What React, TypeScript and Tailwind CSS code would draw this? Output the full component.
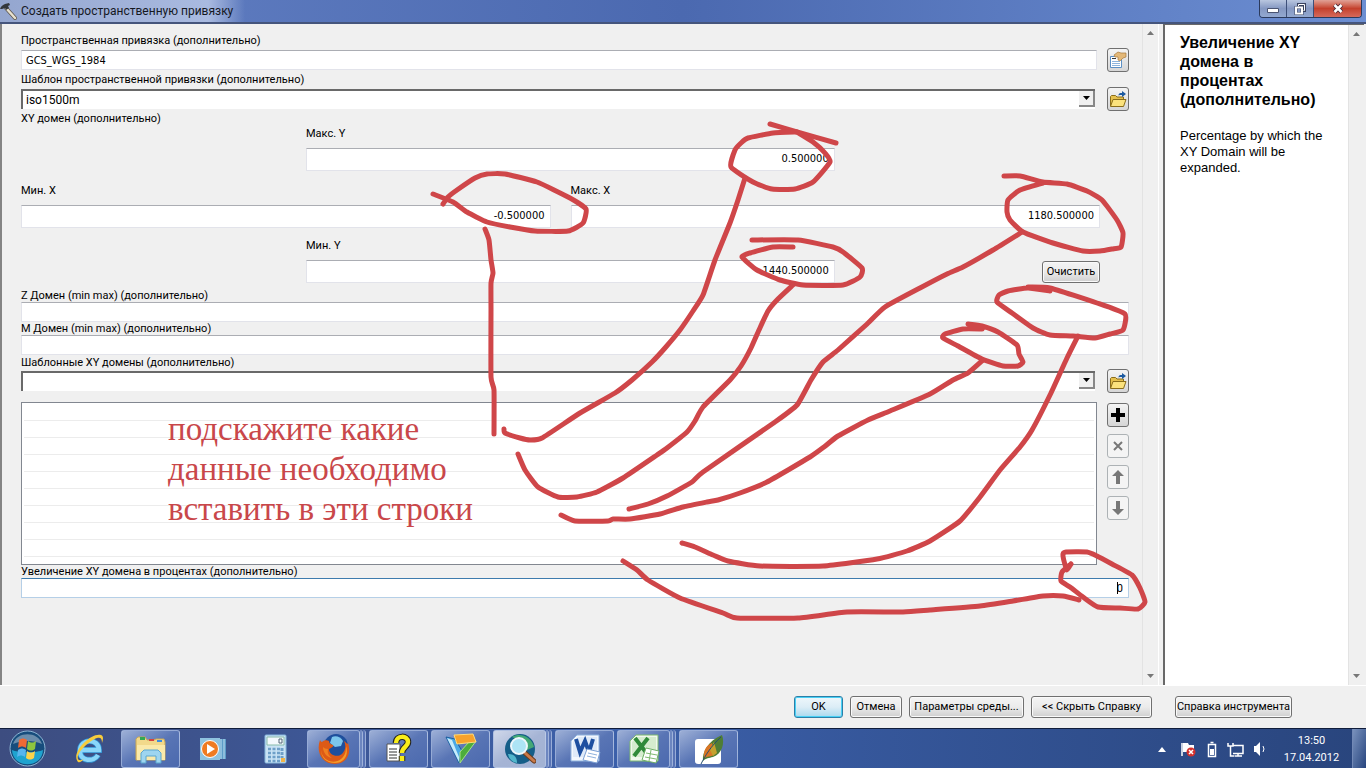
import type { ReactNode } from 'react'

const LABEL = "block text-[11px] text-black whitespace-nowrap"
const FIELD =
  "block w-full border border-[#e2e3ea] border-t-[#abadb3] bg-white px-1 text-[11px] text-black outline-none font-['DejaVu_Sans_Condensed',sans-serif]"
const BUTTON =
  "h-[22px] shrink-0 whitespace-nowrap rounded-[3px] border border-[#707070] bg-linear-to-b from-[#f4f4f4] via-[#ebebeb] to-[#cfcfcf] text-[11px] text-black shadow-[inset_0_0_0_1px_#fafafa]"

// Freehand red marks drawn over the dialog
const strokes = [
  '770,124 797,132 836,143',
  '797,132 813,142 825,153 830,162 813,182 795,189 772,189 753,182 731,167 735,150 741,143 748,138 773,133 797,132',
  '745,178 738,200 730,223 715,260 703,295 693,311 680,330 665,348 652,362 632,380 615,393 580,413 542,438 530,440 520,438 505,433 504,429',
  '433,194 453,202 467,212 487,222 510,227 535,231 568,231 583,223 586,209 570,198 537,182 505,174 487,174 475,178 457,190 448,197 443,204',
  '485,229 489,240 491,260 493,273 491,283 491,310 491,377 494,390 494,434',
  '752,240 798,240 833,247 843,252 862,268 860,277 843,285 803,285 780,280 757,270 742,257 750,253 773,247 793,247',
  '793,285 777,300 768,311 759,330 751,348 741,366 730,380 703,407 695,421 687,432 667,448 657,455 623,478 597,492 577,497 558,497 538,487 525,470 518,454',
  '1004,176 1020,176 1043,182 1067,184 1087,191 1102,200 1117,220 1123,233 1121,247 1112,249 1100,251 1083,251 1053,243 1023,232 1010,220 1007,212 1008,200 1020,190 1043,183',
  '1022,232 993,250 963,267 947,274 920,288 885,307 866,325 838,350 823,362 811,380 797,405 775,422 703,472 692,482 667,496 648,504 629,509',
  '1028,287 1050,288 1097,303 1125,314 1123,330 1110,334 1095,338 1073,336 1050,335 1033,328 1012,313 997,302 999,295 1008,291 1028,288 1050,291',
  '1078,336 1067,358 1050,395 1032,430 1020,447 1000,470 980,497 960,521 930,541 907,551 877,559 823,566 760,566 728,561 713,555 695,547 682,543',
  '968,324 982,326 998,332 1017,345 1019,354 1023,362 1018,366 1003,366 982,359 958,346 943,338 945,334 963,329 982,329',
  '983,360 968,373 953,380 930,394 890,411 868,420 838,436 824,447 810,457 767,482 740,493 718,500 707,502 683,507 660,514 630,519 613,519 608,521 575,521 561,515',
  '623,561 637,570 648,580 680,598 723,613 737,618 798,618 847,612 903,612 930,610 980,606 1013,601 1043,596 1063,596 1079,600',
  '1071,564 1067,570 1064,561 1063,554 1066,552 1087,552 1097,556 1112,564 1132,575 1140,588 1145,602 1138,609 1120,608 1098,607 1083,597 1070,587 1061,581 1062,572 1071,564',
]

// Catmull-Rom spline through the points of a stroke
function smooth(points: string) {
  const p = points.split(' ').map((pair) => pair.split(',').map(Number))
  let d = `M${p[0][0]} ${p[0][1]}`
  for (let i = 0; i < p.length - 1; i++) {
    const a = p[i - 1] ?? p[i]
    const b = p[i]
    const c = p[i + 1]
    const e = p[i + 2] ?? c
    d += `C${b[0] + (c[0] - a[0]) / 12} ${b[1] + (c[1] - a[1]) / 12} ${c[0] - (e[0] - b[0]) / 12} ${c[1] - (e[1] - b[1]) / 12} ${c[0]} ${c[1]}`
  }
  return d
}

function Combo({ id, value }: { id: string; value: string }) {
  return (
    <div className="relative h-5 flex-1 border-l-2 border-t-2 border-[#696969] bg-white">
      <select id={id} defaultValue={value} className="block h-full w-full appearance-none bg-transparent px-[3px] text-xs leading-4 text-black outline-none">
        <option>{value}</option>
      </select>
      <div className="pointer-events-none absolute right-0 top-0 flex h-4 w-4 items-center justify-center border-b-2 border-r-2 border-[#888] bg-[#f0f0f0]">
        <svg width="7" height="4" viewBox="0 0 7 4"><path d="M0 0h7L3.5 4z" /></svg>
      </div>
    </div>
  )
}

function ToolButton({ label, disabled, children }: { label: string; disabled?: boolean; children: ReactNode }) {
  return (
    <button
      type="button"
      aria-label={label}
      disabled={disabled}
      className="flex h-6 w-[22px] shrink-0 items-center justify-center rounded-[3px] border border-[#707070] bg-linear-to-b from-[#f4f4f4] to-[#d6d6d6] disabled:border-[#adb2b5] disabled:from-[#f4f4f4] disabled:to-[#f4f4f4]"
    >
      {children}
    </button>
  )
}

function FolderIcon() {
  return (
    <svg width="18" height="18" viewBox="0 0 18 18">
      <path d="M1.500 16V6.500l1-1h4l1.500 1.500h6.500v3" fill="#e5c04c" stroke="#8a6d1a" />
      <path d="M1.500 16.500 4 9.500h13L14.500 16.500z" fill="#fbe27c" stroke="#8a6d1a" />
      <path d="M9.500 5.500c0-2 1-2.500 3.500-2.500V1l4 3-4 3V5c-2 0-2.500 0-3.500.500z" fill="#1c5aa0" />
    </svg>
  )
}

function PropertiesIcon() {
  return (
    <svg width="18" height="18" viewBox="0 0 18 18">
      <path d="M1.500 5.500h11v11h-11z" fill="#fff" stroke="#5b8fc4" />
      <path d="M3 10.500h8M3 12.500h8M3 14.500h8" stroke="#8db4dc" />
      <path d="M3 7.500h4" stroke="#333" />
      <path d="m5 4 4-3 3 1h5v4l-3 1-3 3-2-1V6H6z" fill="#e3b878" stroke="#a87a3c" strokeWidth=".7" />
    </svg>
  )
}

function ScrollRail() {
  return (
    <div className="flex w-4 shrink-0 flex-col items-center justify-between border-l border-[#e3e3e3] bg-[#f0f0f0] pb-[7px] pt-[7px]">
      <svg width="7" height="4" viewBox="0 0 7 4"><path d="M0 4h7L3.500 0z" fill="#777" /></svg>
      <svg width="7" height="4" viewBox="0 0 7 4"><path d="M0 0h7L3.500 4z" fill="#777" /></svg>
    </div>
  )
}

function NumberField({ id, label, value }: { id: string; label: string; value: string }) {
  return (
    <>
      <label htmlFor={id} className={`${LABEL} pb-2 leading-3`}>{label}</label>
      <input id={id} defaultValue={value} className={`${FIELD} h-[23px] pb-[2px] pr-[5px] text-right`} />
    </>
  )
}

function TitleBar() {
  return (
    <header className="flex h-[22px] items-start justify-between bg-linear-to-r from-[#6481c4] via-[#4b69b0] to-[#6c8ed2]">
      <div className="flex h-[22px] items-center bg-linear-to-r from-[#94a6cf] via-[#a9bae0] via-[85%] to-transparent pr-3">
        <svg width="18" height="20" viewBox="0 0 18 20">
          <path d="m6 7 9 10" stroke="#5d5549" strokeWidth="4" strokeLinecap="round" />
          <path d="m6 7 9 10" stroke="#e8e2d0" strokeWidth="2.500" strokeLinecap="round" />
          <path d="M0 8c1-3 3-4 5-5l4-1 1 2-2 1 1 2-3 2-1-2-3 1z" fill="#33373c" />
        </svg>
        <h1 className="pl-[3px] text-xs text-[#15181f]">Создать пространственную привязку</h1>
      </div>
      <div className="mr-1 flex h-[18px] overflow-hidden rounded-b-[4px] border border-t-0 border-[#2b3a5c]">
        <button aria-label="Свернуть" className="flex w-[27px] items-end justify-center border-r border-[#3d4f79] bg-linear-to-b from-[#b9c6df] via-[#8598c2] to-[#93a8d0] pb-1">
          <svg width="12" height="5" viewBox="0 0 12 5"><path d="M.5.5h11v4H.5z" fill="#fff" stroke="#4a5472" /></svg>
        </button>
        <button aria-label="Восстановить" className="flex w-[27px] items-center justify-center border-r border-[#3d4f79] bg-linear-to-b from-[#b9c6df] via-[#8598c2] to-[#93a8d0]">
          <svg width="12" height="12" viewBox="0 0 12 12"><path d="M4.500 1.500h6v6h-6z" fill="none" stroke="#39425f" strokeWidth="3" /><path d="M4.500 1.500h6v6h-6z" fill="none" stroke="#fff" /><path d="M2 4.500h6v6H2z" fill="#8598c2" stroke="#39425f" strokeWidth="3" /><path d="M2 4.500h6v6H2z" fill="none" stroke="#fff" strokeWidth="2" /></svg>
        </button>
        <button aria-label="Закрыть" className="flex w-[47px] items-center justify-center bg-linear-to-b from-[#e0a196] via-[#c4402c] to-[#d5695a]">
          <svg width="12" height="11" viewBox="0 0 12 11"><path d="m2.500 2 7 7m0-7-7 7" stroke="#4b2a36" strokeWidth="4.500" /><path d="m2.500 2 7 7m0-7-7 7" stroke="#fff" strokeWidth="2.500" /></svg>
        </button>
      </div>
    </header>
  )
}

function ParameterForm() {
  return (
    <form className="min-w-0 flex-1 pb-4 pl-[21px] pr-[13px] pt-[7px]">
      <label htmlFor="sr" className={`${LABEL} leading-[19px]`}>Пространственная привязка (дополнительно)</label>
      <div className="flex h-5 items-center gap-[10px]">
        <input id="sr" defaultValue="GCS_WGS_1984" className={`${FIELD} h-5 flex-1`} />
        <ToolButton label="Свойства"><PropertiesIcon /></ToolButton>
      </div>
      <label htmlFor="template" className={`${LABEL} leading-[19px]`}>Шаблон пространственной привязки (дополнительно)</label>
      <div className="flex h-5 items-center gap-3">
        <Combo id="template" value="iso1500m" />
        <ToolButton label="Открыть шаблон"><FolderIcon /></ToolButton>
      </div>

      <fieldset className="mr-[29px]">
        <legend className={`${LABEL} leading-[19px]`}>XY домен (дополнительно)</legend>
        <div className="ml-[285px] w-[49%]">
          <NumberField id="ymax" label="Макс. Y" value="0.500000" />
        </div>
        <div className="grid grid-cols-2 gap-5 pt-[14px]">
          <div><NumberField id="xmin" label="Мин. X" value="-0.500000" /></div>
          <div><NumberField id="xmax" label="Макс. X" value="1180.500000" /></div>
        </div>
        <div className="flex items-end justify-between pt-3">
          <div className="ml-[285px] w-[49%]">
            <NumberField id="ymin" label="Мин. Y" value="-1440.500000" />
          </div>
          <button type="button" className={`${BUTTON} w-[58px]`}>Очистить</button>
        </div>
      </fieldset>

      <label htmlFor="zdomain" className={`${LABEL} pt-[6px] leading-[13px]`}>Z Домен (min max) (дополнительно)</label>
      <input id="zdomain" className={`${FIELD} h-5`} />
      <label htmlFor="mdomain" className={`${LABEL} leading-[13px]`}>M Домен (min max) (дополнительно)</label>
      <input id="mdomain" className={`${FIELD} h-5`} />
      <label htmlFor="xydomains" className={`${LABEL} leading-4`}>Шаблонные XY домены (дополнительно)</label>
      <div className="flex h-5 items-center gap-3">
        <Combo id="xydomains" value="" />
        <ToolButton label="Открыть домены"><FolderIcon /></ToolButton>
      </div>

      <div className="flex gap-[10px] pt-[11px]">
        <div className="flex-1 border border-[#828790] bg-white px-[2px] pt-px">
          {Array.from({ length: 9 }, (_, i) => (
            <div key={i} className="h-[17px] border-b border-[#ececec]" />
          ))}
          <div className="h-[7px]" />
        </div>
        <div className="flex flex-col gap-[7px] pt-px">
          <ToolButton label="Добавить">
            <svg width="14" height="14" viewBox="0 0 14 14"><path d="M7 0v14M0 7h14" stroke="#000" strokeWidth="4" /></svg>
          </ToolButton>
          <ToolButton label="Удалить" disabled>
            <svg width="10" height="10" viewBox="0 0 10 10"><path d="m1 1 8 8m0-8L1 9" stroke="#777" strokeWidth="2" /></svg>
          </ToolButton>
          <ToolButton label="Вверх" disabled>
            <svg width="12" height="14" viewBox="0 0 12 14"><path d="M6 0 0 6h4v8h4V6h4z" fill="#777" /></svg>
          </ToolButton>
          <ToolButton label="Вниз" disabled>
            <svg width="12" height="14" viewBox="0 0 12 14"><path d="M6 14 0 8h4V0h4v8h4z" fill="#777" /></svg>
          </ToolButton>
        </div>
      </div>

      <label htmlFor="expand" className={`${LABEL} leading-[13px]`}>Увеличение XY домена в процентах (дополнительно)</label>
      <div className="relative">
        <input id="expand" defaultValue="0" className="block h-5 w-full border border-[#b5cfe7] border-t-[#3d7bad] bg-white px-[5px] text-right text-[11px] outline-none" />
        <span className="absolute right-[11px] top-1 h-3 w-px bg-black" />
      </div>
    </form>
  )
}

function HelpPanel() {
  return (
    <aside className="flex w-[201px] shrink-0 border-l-2 border-t border-[#696969] bg-white">
      <div className="flex-1 pl-[15px] pr-5 pt-2 font-['Liberation_Sans',Arial,sans-serif] text-black">
        <h2 className="text-base font-bold leading-[19px]">Увеличение XY домена в процентах (дополнительно)</h2>
        <p className="pt-[19px] text-[13px] leading-4">Percentage by which the XY Domain will be expanded.</p>
      </div>
      <ScrollRail />
    </aside>
  )
}

const apps: { name: string; state: string; icon: ReactNode }[] = [
  {
    name: 'Internet Explorer', state: 'idle',
    icon: <>
      <path d="M8 17h18c0-12-19-12-19 1 0 11 14 11 18 4" fill="none" stroke="#2f8fd0" strokeWidth="6" />
      <path d="M8 17h18c0-12-19-12-19 1 0 11 14 11 18 4" fill="none" stroke="#8ad6fa" strokeWidth="4.500" />
      <path d="M5 29C-3 20 18-1 28 2c3 1 2 5 1 8 0-4-1-6-5-5C16 8 3 20 5 26c1 2 4 1 6 0-2 2-4 4-6 3z" fill="#f7cc3c" />
    </>,
  },
  {
    name: 'Проводник', state: 'open',
    icon: <>
      <path d="M1 27V6l2-2h7l2 3h7l2-1h8l1 3v18z" fill="#f2d98b" stroke="#c9a857" />
      <path d="M5 4h5v3H5z" fill="#33a852" /><path d="M14 6h5v2h-5z" fill="#d7443e" /><path d="M22 7h5v2h-5z" fill="#3c8de0" />
      <path d="M2 12h28v15H2z" fill="#fae9aa" />
      <path d="M6 30V20l3-3h14l3 3v10h-5v-7H11v7z" fill="#9ed5f0" stroke="#5ba6cf" />
    </>,
  },
  {
    name: 'Медиаплеер', state: 'idle',
    icon: <>
      <path d="M20 6h9v20h-9z" fill="#5d9cc8" /><path d="M24 6v20m3-20v20" stroke="#bfe0f2" />
      <path d="M3 5h20v22H3z" fill="#8fc3e0" /><circle cx="13" cy="16" r="8.500" fill="#ef7b22" stroke="#fff" /><path d="m10 11 8 5-8 5z" fill="#fff" />
    </>,
  },
  {
    name: 'Калькулятор', state: 'idle',
    icon: <>
      <rect x="6" y="2" width="21" height="28" rx="1" fill="#c9e2f4" stroke="#88b8dc" />
      <path d="M8 4h17v8H8z" fill="#f4f9fd" stroke="#8ba" /><path d="M20 6h3v4h-3z" fill="none" stroke="#567" />
      <path d="M9 16h12M9 20h12M9 24h12M9 28h12" stroke="#6e9fc8" strokeWidth="2.500" strokeDasharray="3 1.500" /><path d="M23 15v10" stroke="#6e9fc8" strokeWidth="3" strokeDasharray="3 1" /><path d="M22 25h4v4h-4z" fill="#f0b44a" />
    </>,
  },
  {
    name: 'Firefox', state: 'stack',
    icon: <>
      <circle cx="18" cy="13" r="12" fill="#1f4f9c" /><path d="M14 4c4-2 9 0 11 4l-2 5-6 1-5-4z" fill="#7cc6ec" />
      <path d="M2 7c1 2 2 2 2 2 2-2 5-2 7-1 0 2 1 3 4 4 1 2-2 3-4 4 0 6 8 9 13 5 4-4 4-9 2-13 3 2 3 4 4 2 4 11-2 21-13 21C3 31-2 18 2 7z" fill="#dd5a17" />
      <path d="M3 17c1 11 13 15 20 9 5-4 5-9 5-13 3 9-2 17-11 17C8 30 3 24 3 17z" fill="#f49c28" />
      <path d="M5 14c0 6 4 10 9 11-3-2-5-5-4-9-2 0-4-1-5-2z" fill="#f07f20" />
    </>,
  },
  {
    name: 'Справка', state: 'open',
    icon: <>
      <path d="M4 11h13v17H4z" fill="#fff" stroke="#555" /><path d="M6 16h8M6 19h8M6 22h8M6 25h8" stroke="#333" />
      <path d="M13 10c0-8 12-8 12-1 0 5-6 5-6 11M19 23v5" fill="none" stroke="#222" strokeWidth="6.500" /><path d="M13 10c0-8 12-8 12-1 0 5-6 5-6 11M19 23v5" fill="none" stroke="#f9ee19" strokeWidth="4.500" />
    </>,
  },
  {
    name: 'Навигация', state: 'open',
    icon: <>
      <path d="m1 4 9 2 7 12-3 12z" fill="#4aa8e4" stroke="#1c5f9f" /><path d="m2 5 5 2 7 17v5z" fill="#c7ebfb" />
      <path d="m31 8-16 22v-11l9-10z" fill="#4cad3d" stroke="#a8e087" /><path d="m9 2 19-1 3 8-19 2z" fill="#f7a22b" stroke="#ffdc7a" />
    </>,
  },
  {
    name: 'ArcMap', state: 'active',
    icon: <>
      <circle cx="16" cy="16" r="15" fill="#155e88" /><path d="M8 4c8-5 20 0 22 10l-7 3-7-9z" fill="#43a876" /><path d="M4 21c8 0 9 5 9 9-5-1-8-4-9-9z" fill="#53b7cc" />
      <path d="m21 20 9 8" stroke="#6a3d20" strokeWidth="5" strokeLinecap="round" /><path d="m21 20 9 8" stroke="#c97a49" strokeWidth="3" strokeLinecap="round" />
      <circle cx="15" cy="13" r="8" fill="#ade4f5" stroke="#eef6fa" strokeWidth="2" />
    </>,
  },
  {
    name: 'Word', state: 'open',
    icon: <>
      <path d="M8 2h22v26H2V8z" fill="#f2f7fd" stroke="#8fb2dd" /><path d="M4 9l5-5h19v20H4z" fill="#dfeaf8" />
      <path d="m7 6 4 13 5-11 4 11 4-13" fill="none" stroke="#1d4fa0" strokeWidth="4" /><path d="m18 16 13 3-3 11-14-3z" fill="#fff" stroke="#7ba0d4" /><path d="m19 20 9 2m-10 1 9 2" stroke="#8fb2dd" />
    </>,
  },
  {
    name: 'Excel', state: 'stack',
    icon: <>
      <path d="M8 2h22v26H2V8z" fill="#f0f8ed" stroke="#7fba70" /><path d="M4 9l5-5h19v20H4z" fill="#d5ecce" />
      <path d="m7 5 13 17M20 5 6 23" stroke="#2f8a39" strokeWidth="4" /><path d="m18 15 13 3-3 12-14-3z" fill="#fff" stroke="#6fb066" /><path d="m18 20 11 2m-12 2 11 2M23 17l-2 11" stroke="#7fba70" />
    </>,
  },
  {
    name: 'Paint', state: 'open',
    icon: <>
      <rect x="2" y="6" width="26" height="25" rx="3" fill="#fff" /><path d="M10 28c-1-9 5-20 19-26 3 8 0 19-9 22-4 1-7 1-10 4z" fill="#4e7d35" />
      <path d="M11 25c-1-8 3-13 8-15l2 12c-3 2-7 1-10 3z" fill="#d97625" /><path d="M17 17l4-8 3 11-4 3z" fill="#c4a12e" /><path d="M8 31c4-8 10-18 20-27" fill="none" stroke="#234d70" />
    </>,
  },
]

function Taskbar() {
  return (
    <nav className="flex h-10 items-center justify-between border-t border-[#101d3b] bg-linear-to-r from-[#3d4d80] via-[#3c60aa] via-[45%] to-[#29457d]">
      <div className="flex h-full items-center">
        <button aria-label="Пуск" className="flex w-[59px] pl-[9px]">
          <svg width="37" height="37" viewBox="0 0 37 37">
            <circle cx="18.500" cy="18.500" r="17.500" fill="#174d7d" stroke="#8fb6d5" />
            <path d="M3 20c6 3 25 3 31 0-1 19-30 19-31 0z" fill="#1fa3cf" /><path d="M4 14C8 1 29 1 33 14c-9-4-20-4-29 0z" fill="#a4b9cb" opacity=".6" />
            <path d="M10 10c3-2 5-2 8 0l-1 8c-3-2-5-2-8 0z" fill="#ee6a35" /><path d="M19 11c3 2 5 2 8 0l-1 8c-3 2-5 2-8 0z" fill="#8dc63f" />
            <path d="M9 20c3-2 5-2 8 0l-1 7c-3-2-5-2-8 0z" fill="#58b5ee" /><path d="M18 21c3 2 5 2 8 0l-1 7c-3 2-5 2-8 0z" fill="#fcd34a" />
          </svg>
        </button>
        <div className="flex h-[38px] gap-[3px]">
          {apps.map((app) => (
            <div key={app.name} className="flex w-[59px]">
              <button
                aria-label={app.name}
                data-state={app.state}
                className="flex flex-1 items-center justify-center rounded-[3px] border border-[#b4c4e6]/70 bg-linear-to-br from-[#9dafd6] via-[#5975b5] to-[#4b69ae] data-[state=active]:from-[#d0d8ea] data-[state=active]:via-[#a5b4d5] data-[state=active]:to-[#a2b2d3] data-[state=idle]:border-transparent data-[state=idle]:from-transparent data-[state=idle]:via-transparent data-[state=idle]:to-transparent"
              >
                <svg width="32" height="32" viewBox="0 0 32 32">{app.icon}</svg>
              </button>
              {(app.state === 'stack' || app.state === 'active') && (
                <>
                  <span className="w-[3px] rounded-r-[3px] border-r border-[#b4c4e6]/70 bg-[#6c86c0]" />
                  <span className="w-[3px] rounded-r-[3px] border-r border-[#b4c4e6]/70 bg-[#5873b4]" />
                </>
              )}
            </div>
          ))}
        </div>
      </div>
      <div className="flex h-full items-center text-white">
        <svg width="110" height="18" viewBox="0 0 110 18">
          <path d="M1 12h8L5 7z" fill="#fff" />
          <path d="M25 3v13" stroke="#fff" strokeWidth="1.500" /><path d="M26 3h5l1 2h5v7H26z" fill="#fff" /><circle cx="34" cy="12" r="4.500" fill="#d3302d" /><path d="m32 10 4 4m0-4-4 4" stroke="#fff" strokeWidth="1.500" />
          <path d="M51.500 4.500h7v12h-7zM53.500 2.500h3" fill="none" stroke="#fff" strokeWidth="1.500" /><path d="M53 9h4v6h-4z" fill="#fff" />
          <path d="M76 5.500h10v8H76M78 16h7M81 13v3M71 3v3h5V3M73.500 6v10h4" fill="none" stroke="#fff" strokeWidth="1.500" />
          <path d="M97 6h2l4-4v14l-4-4h-2z" fill="#fff" /><path d="M106 6q2 3 0 6" fill="none" stroke="#fff" />
        </svg>
        <time className="w-[85px] pl-1 text-center text-[11px] leading-[17px]">
          13:50<br />17.04.2012
        </time>
        <button aria-label="Показать рабочий стол" className="h-full w-[14px] border-l border-[#7289b6] bg-linear-to-br from-[#7a92bd] to-[#28457e]" />
      </div>
    </nav>
  )
}

export default function App() {
  return (
    <div className="relative flex min-h-screen flex-col overflow-hidden bg-[#f0f0f0] font-[Roboto,'Noto_Sans',sans-serif]">
      <TitleBar />
      <main className="flex flex-1 border-t-2 border-[#45557c]">
        <section className="flex min-w-0 flex-1 border-l-2 border-[#696969]/80">
          <div className="-ml-[2px] flex min-w-0 flex-1">
            <ParameterForm />
            <ScrollRail />
          </div>
        </section>
        <div className="w-[5px] border-l border-white bg-[#f0f0f0]" />
        <HelpPanel />
        <div className="w-[2px] bg-[#f0f0f0]" />
      </main>
      <footer className="flex h-[43px] shrink-0 items-center justify-end gap-[7px] border-t border-white pr-[74px]">
        <button className="h-[22px] w-[49px] rounded-[3px] border border-[#2c7fa8] bg-linear-to-b from-[#eef7fb] via-[#dcedf6] to-[#a9d9ee] text-[11px] shadow-[inset_0_0_0_1px_#48d0f5]">OK</button>
        <button className={`${BUTTON} w-[52px]`}>Отмена</button>
        <button className={`${BUTTON} w-[115px]`}>Параметры среды...</button>
        <button className={`${BUTTON} w-[121px]`}>&lt;&lt; Скрыть Справку</button>
        <button className={`${BUTTON} ml-4 w-[117px]`}>Справка инструмента</button>
      </footer>
      <Taskbar />

      {/* Hand-drawn notes on top of the window */}
      <svg className="pointer-events-none absolute left-0 top-0" width="1366" height="768" viewBox="0 0 1366 768">
        {strokes.map((points) => (
          <path key={points} d={smooth(points)} fill="none" stroke="#cf4649" strokeWidth="5" strokeLinecap="round" strokeLinejoin="round" />
        ))}
      </svg>
      <p className="pointer-events-none absolute left-[168px] top-[409px] whitespace-nowrap font-['Liberation_Serif','Times_New_Roman',serif] text-[33px] leading-10 text-[#c9474a]">
        подскажите какие<br />данные необходимо<br />вставить в эти строки
      </p>
    </div>
  )
}
